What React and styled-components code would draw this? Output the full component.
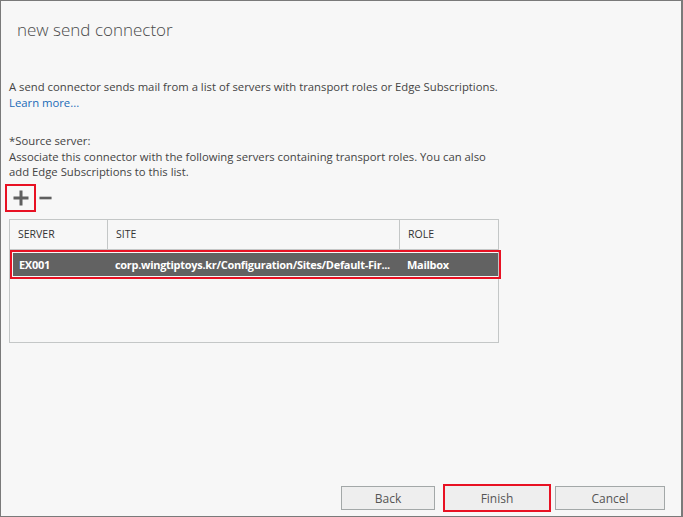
import React from 'react';
import styled, { createGlobalStyle } from 'styled-components';

const GlobalStyle = createGlobalStyle`
  html, body {
    margin: 0;
    padding: 0;
    background: #ffffff;
  }
  * {
    box-sizing: border-box;
  }
`;

const Window = styled.div`
  width: 683px;
  height: 517px;
  display: flex;
  flex-direction: column;
  background: #f7f7f7;
  border-style: solid;
  border-color: #7a7a7a;
  border-width: 1px 2px 1px 1px;
  font-family: 'Open Sans', 'Noto Sans', sans-serif;
  font-size: 11.3px;
  color: #444;
`;

const Title = styled.h1`
  margin: 0;
  padding: 17px 0 0 16px;
  font-size: 17px;
  font-weight: 300;
  line-height: 24px;
  color: #4a4a4a;
`;

const Content = styled.div`
  display: flex;
  flex-direction: column;
  padding: 0 0 0 8px;
`;

const Paragraph = styled.p`
  margin: ${(p) => p.$top || 0}px 0 0;
  line-height: ${(p) => p.$lh || 16}px;
  color: #444;
`;

const Link = styled.a`
  color: #1a6bb8;
  text-decoration: none;
`;

const Toolbar = styled.div`
  display: flex;
  align-items: center;
  gap: 2px;
  margin: 4px 0 0 -4px;
`;

const IconButton = styled.button`
  width: 31px;
  height: 28px;
  padding: 0;
  display: flex;
  align-items: center;
  justify-content: center;
  background: transparent;
  border: 2px solid ${(p) => (p.$active ? '#e81123' : 'transparent')};
  cursor: pointer;
`;

const MinusButton = styled(IconButton)`
  width: 17px;
  margin-left: -1px;
`;

const Table = styled.div`
  width: 490px;
  height: 124px;
  margin-top: 7px;
  border: 1px solid #c4c7c7;
  display: flex;
  flex-direction: column;
`;

const HeaderRow = styled.div`
  display: grid;
  grid-template-columns: 98px 292px 1fr;
  height: 30px;
  border-bottom: 1px solid #c4c7c7;
`;

const HeaderCell = styled.div`
  display: flex;
  align-items: center;
  padding-left: 8px;
  font-size: 10.5px;
  color: #333;
  border-right: ${(p) => (p.$last ? 'none' : '1px solid #c4c7c7')};
`;

const DataRow = styled.div`
  display: grid;
  grid-template-columns: 96px 292px 1fr;
  height: 23px;
  margin: 3px 0 0 3px;
  width: 485px;
  background: ${(p) => (p.$selected ? '#626262' : 'transparent')};
  color: ${(p) => (p.$selected ? '#ffffff' : '#333')};
  outline: ${(p) => (p.$selected ? '2px solid #e81123' : 'none')};
  outline-offset: 1px;
`;

const DataCell = styled.div`
  display: flex;
  align-items: center;
  padding-left: 6px;
  font-size: 11px;
  font-weight: 700;
  letter-spacing: -0.3px;
  white-space: nowrap;
`;

const Footer = styled.div`
  margin-top: auto;
  display: flex;
  justify-content: flex-end;
  align-items: center;
  padding: 0 16px 6px 0;
`;

const Button = styled.button`
  width: ${(p) => p.$w}px;
  height: 24px;
  margin-left: ${(p) => p.$gap || 0}px;
  background: #eeeeee;
  border: 1px solid ${(p) => (p.$highlight ? 'transparent' : '#a3a8a8')};
  font-family: 'Open Sans', 'Noto Sans', sans-serif;
  font-size: 12px;
  color: #555;
  padding: 0;
  cursor: pointer;
  outline: ${(p) => (p.$highlight ? '2px solid #e81123' : 'none')};
  outline-offset: 0;
`;

const servers = [
  {
    server: 'EX001',
    site: 'corp.wingtiptoys.kr/Configuration/Sites/Default-Fir...',
    role: 'Mailbox',
  },
];

export default function App() {
  return (
    <Window>
      <GlobalStyle />
      <Title>new send connector</Title>
      <Content>
        <Paragraph $top={37}>
          A send connector sends mail from a list of servers with transport roles or Edge Subscriptions.
          <br />
          <Link href="#">Learn more...</Link>
        </Paragraph>
        <Paragraph $top={22} $lh={15.5}>
          *Source server:
          <br />
          Associate this connector with the following servers containing transport roles. You can also
          <br />
          add Edge Subscriptions to this list.
        </Paragraph>
        <Toolbar>
          <IconButton $active aria-label="add">
            <svg width="16" height="16" viewBox="0 0 16 16">
              <rect x="0.5" y="6.5" width="15" height="3" fill="#5f5f5f" />
              <rect x="6.5" y="0.5" width="3" height="15" fill="#5f5f5f" />
            </svg>
          </IconButton>
          <MinusButton aria-label="remove">
            <svg width="15" height="16" viewBox="0 0 15 16">
              <rect x="0.5" y="6.5" width="14" height="3" fill="#5f5f5f" />
            </svg>
          </MinusButton>
        </Toolbar>
        <Table>
          <HeaderRow>
            <HeaderCell>SERVER</HeaderCell>
            <HeaderCell>SITE</HeaderCell>
            <HeaderCell $last>ROLE</HeaderCell>
          </HeaderRow>
          {servers.map((s) => (
            <DataRow key={s.server} $selected>
              <DataCell>{s.server}</DataCell>
              <DataCell>{s.site}</DataCell>
              <DataCell>{s.role}</DataCell>
            </DataRow>
          ))}
        </Table>
      </Content>
      <Footer>
        <Button $w={94}>Back</Button>
        <Button $w={104} $gap={10} $highlight>
          Finish
        </Button>
        <Button $w={110} $gap={6}>
          Cancel
        </Button>
      </Footer>
    </Window>
  );
}
